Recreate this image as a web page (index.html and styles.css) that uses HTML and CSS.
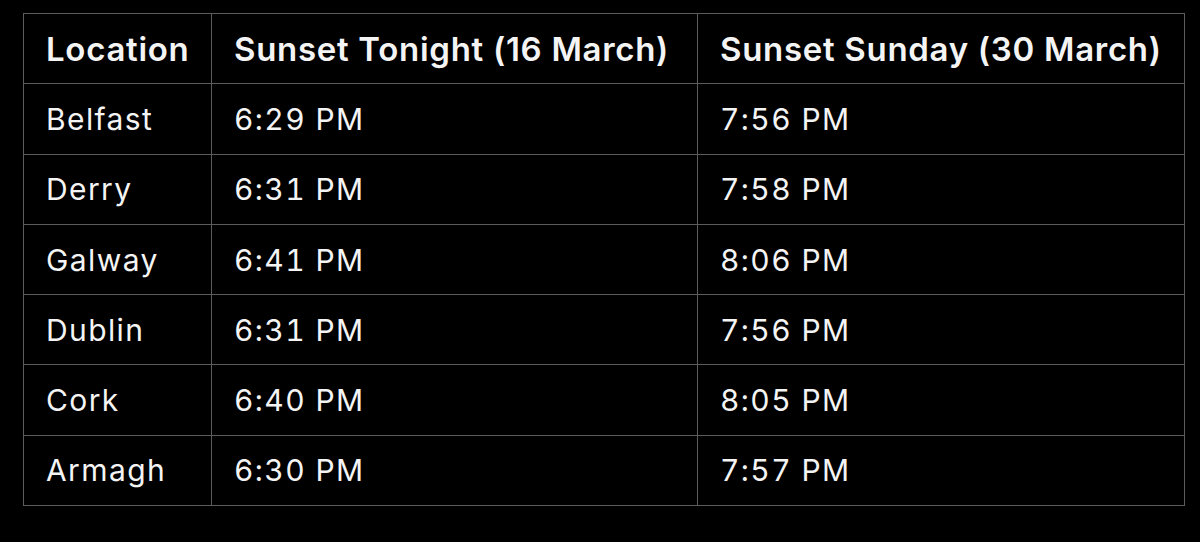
FILE: index.html
```html
<!DOCTYPE html>
<html lang="en">
<head>
<meta charset="utf-8">
<title>Sunset times</title>
<link rel="stylesheet" href="styles.css">
</head>
<body>
<table class="sunset">
  <colgroup>
    <col class="c1"><col class="c2"><col class="c3">
  </colgroup>
  <thead>
    <tr><th>Location</th><th>Sunset Tonight (16 March)</th><th>Sunset Sunday (30 March)</th></tr>
  </thead>
  <tbody>
    <tr><td>Belfast</td><td>6:29 PM</td><td>7:56 PM</td></tr>
    <tr><td>Derry</td><td>6:31 PM</td><td>7:58 PM</td></tr>
    <tr><td>Galway</td><td>6:41 PM</td><td>8:06 PM</td></tr>
    <tr><td>Dublin</td><td>6:31 PM</td><td>7:56 PM</td></tr>
    <tr><td>Cork</td><td>6:40 PM</td><td>8:05 PM</td></tr>
    <tr><td>Armagh</td><td>6:30 PM</td><td>7:57 PM</td></tr>
  </tbody>
</table>
</body>
</html>
```
FILE: styles.css
```css
html, body {
  margin: 0;
  background: #000;
}
body {
  padding: 13px 0 0 23px;
  font-family: Inter, "Liberation Sans", sans-serif;
  color: #f4f4f4;
}
.sunset {
  border-collapse: collapse;
  table-layout: fixed;
  width: 1161px;
}
.c1 { width: 188px; }
.c2 { width: 486px; }
.c3 { width: 487px; }
.sunset th,
.sunset td {
  border: 1px solid #5c5c5c;
  height: 70.3px;
  padding: 0 0 0 22px;
  text-align: left;
  vertical-align: middle;
  box-sizing: border-box;
}
.sunset th {
  font-size: 33px;
  font-weight: 600;
  letter-spacing: 0.7px;
}
.sunset td {
  font-size: 30px;
  font-weight: 400;
  letter-spacing: 1.4px;
  font-feature-settings: "tnum" 1;
}
```
